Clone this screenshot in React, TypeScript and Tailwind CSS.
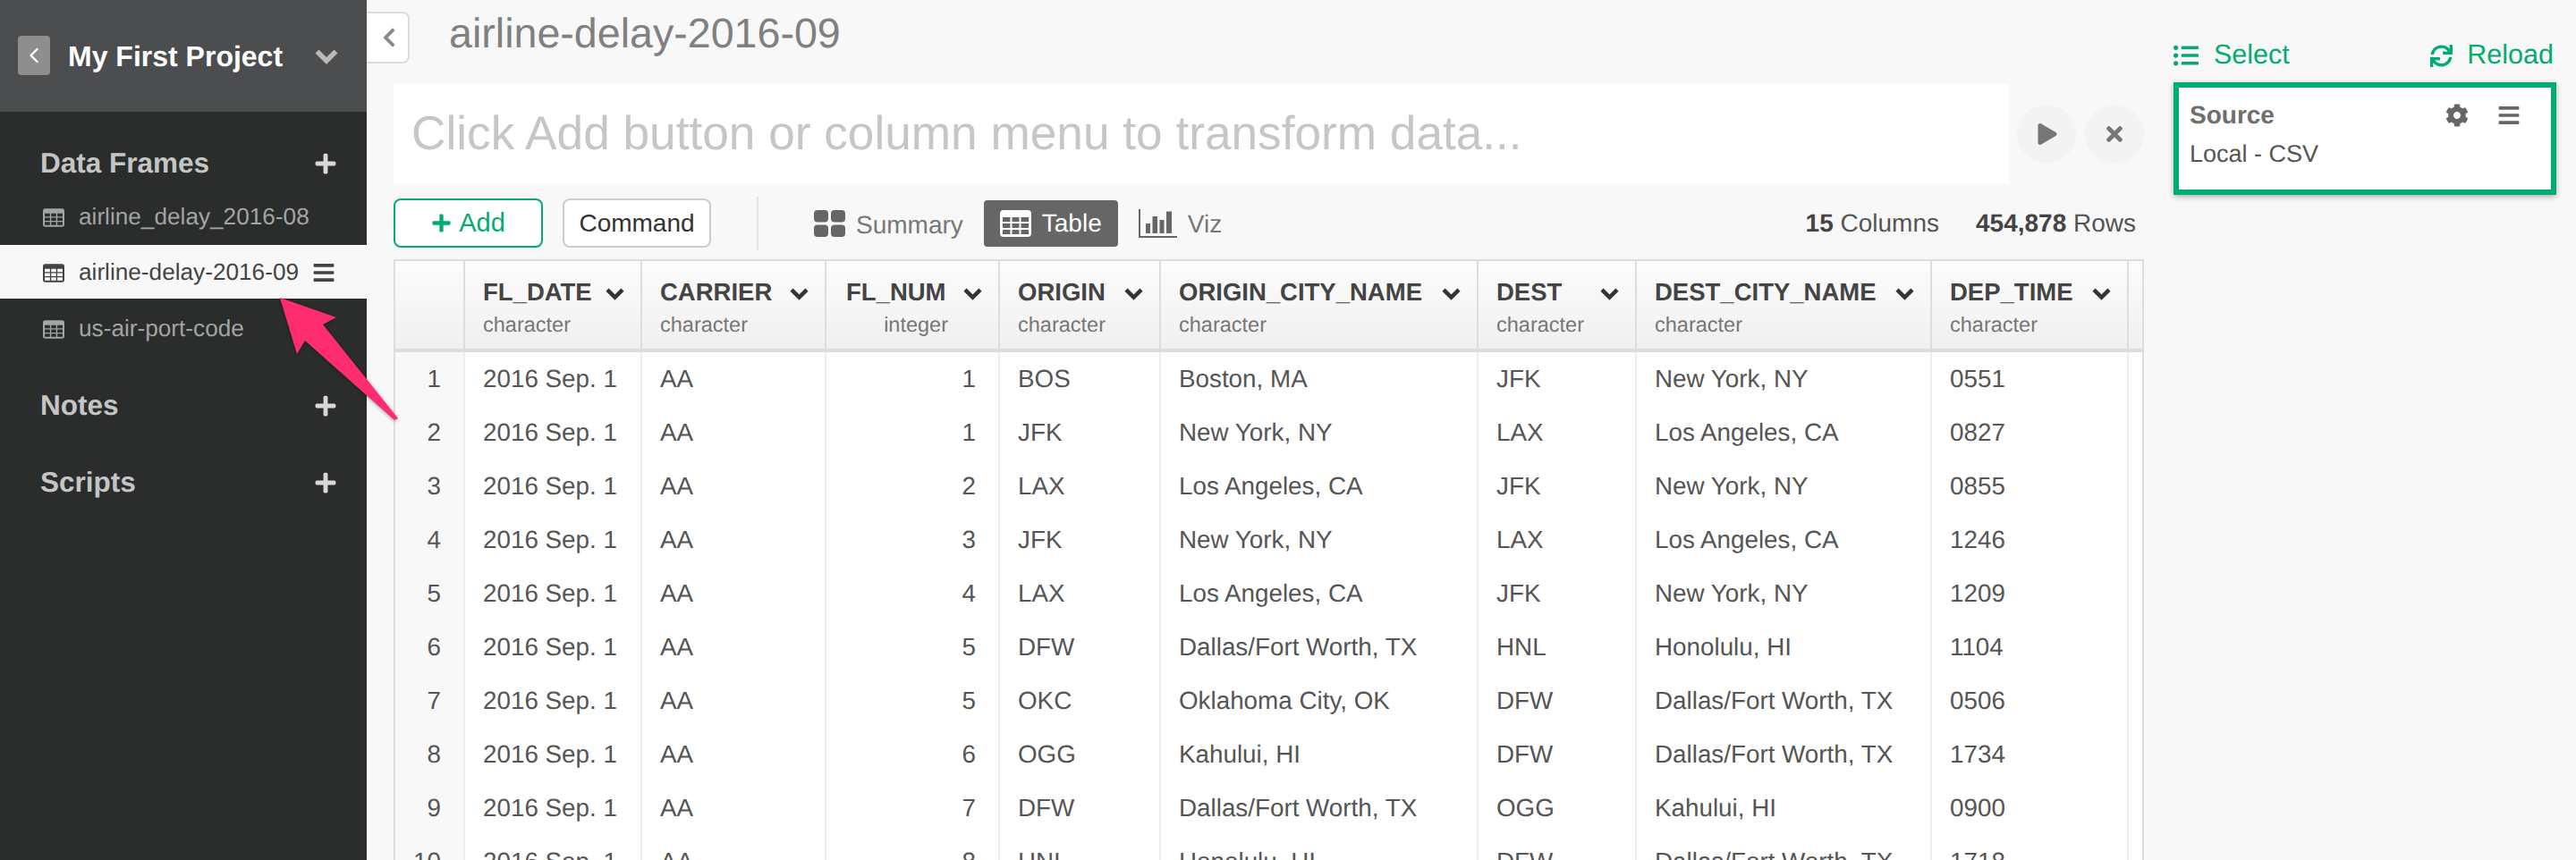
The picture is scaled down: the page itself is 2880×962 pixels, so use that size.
import { FaBars, FaChevronLeft, FaCog, FaListUl, FaPlay, FaPlus, FaSync, FaTimes } from 'react-icons/fa';
import { ChevronLeft } from 'lucide-react';

const gridCols = 'grid grid-cols-[78px_198px_206px_194px_180px_355px_177px_330px_220px_1fr]';

const columns = [
  { name: 'FL_DATE', type: 'character' },
  { name: 'CARRIER', type: 'character' },
  { name: 'FL_NUM', type: 'integer', right: true },
  { name: 'ORIGIN', type: 'character' },
  { name: 'ORIGIN_CITY_NAME', type: 'character' },
  { name: 'DEST', type: 'character' },
  { name: 'DEST_CITY_NAME', type: 'character' },
  { name: 'DEP_TIME', type: 'character' },
];

const rows = [
  ['1', 'BOS', 'Boston, MA', 'JFK', 'New York, NY', '0551'],
  ['1', 'JFK', 'New York, NY', 'LAX', 'Los Angeles, CA', '0827'],
  ['2', 'LAX', 'Los Angeles, CA', 'JFK', 'New York, NY', '0855'],
  ['3', 'JFK', 'New York, NY', 'LAX', 'Los Angeles, CA', '1246'],
  ['4', 'LAX', 'Los Angeles, CA', 'JFK', 'New York, NY', '1209'],
  ['5', 'DFW', 'Dallas/Fort Worth, TX', 'HNL', 'Honolulu, HI', '1104'],
  ['5', 'OKC', 'Oklahoma City, OK', 'DFW', 'Dallas/Fort Worth, TX', '0506'],
  ['6', 'OGG', 'Kahului, HI', 'DFW', 'Dallas/Fort Worth, TX', '1734'],
  ['7', 'DFW', 'Dallas/Fort Worth, TX', 'OGG', 'Kahului, HI', '0900'],
  ['8', 'HNL', 'Honolulu, HI', 'DFW', 'Dallas/Fort Worth, TX', '1718'],
];

function TableIcon({ className }: { className?: string }) {
  return (
    <svg viewBox="0 0 35 30" className={className} fill="currentColor">
      <path
        fillRule="evenodd"
        d="M4 0h27a4 4 0 0 1 4 4v22a4 4 0 0 1-4 4H4a4 4 0 0 1-4-4V4a4 4 0 0 1 4-4zM3 8v5h8.500V8zm10.500 0v5h8V8zm10 0v5H32V8zM3 15v5h8.500v-5zm10.500 0v5h8v-5zm10 0v5H32v-5zM3 22v5h8.500v-5zm10.500 0v5h8v-5zm10 0v5H32v-5z"
      />
    </svg>
  );
}

function SummaryIcon({ className }: { className?: string }) {
  return (
    <svg viewBox="0 0 35 30" className={className} fill="currentColor">
      <rect x="0" y="0" width="16" height="13.500" rx="4" />
      <rect x="19" y="0" width="16" height="13.500" rx="4" />
      <rect x="0" y="16.500" width="16" height="13.500" rx="4" />
      <rect x="19" y="16.500" width="16" height="13.500" rx="4" />
    </svg>
  );
}

function VizIcon({ className }: { className?: string }) {
  return (
    <svg viewBox="0 0 43 32" className={className} fill="currentColor">
      <path d="M0 0h2v30h41v2H0z" />
      <path d="M8 16h5v11H8zM15.500 8H21v19h-5.500zM23.500 12h5v15h-5zM31 2.500h6V27h-6z" />
    </svg>
  );
}

// same heavy "v" that the header and the column menus use
function Chevron({ className }: { className?: string }) {
  return (
    <svg viewBox="0 0 26 18" className={className} fill="none" stroke="currentColor" strokeWidth="5.500">
      <polyline points="2.500,3.500 13,14 23.500,3.500" />
    </svg>
  );
}

function SideHeading({ label, className }: { label: string; className?: string }) {
  return (
    <div className={`flex h-[50px] items-center justify-between pl-[45px] pr-[33px] ${className ?? ''}`}>
      <span className="text-[31.500px] font-bold text-[#c4c5c5]">{label}</span>
      <FaPlus className="h-[26px] w-[26px] text-[#d8d8d8]" />
    </div>
  );
}

export default function App() {
  return (
    <div className="relative flex h-[962px] w-[2880px] overflow-hidden bg-[#f8f8f8] font-['Liberation_Sans',Arial,sans-serif] [text-rendering:geometricPrecision]">
      <aside className="h-full w-[410px] shrink-0 bg-[#2b2d2d]">
        <div className="flex h-[125px] items-start bg-[#4c4d4f] pl-[20px] pr-[32px] pt-[40px]">
          <div className="flex h-[44px] w-[36px] items-center justify-center rounded-[4px] bg-[#8e8e8f]">
            <ChevronLeft className="h-[28px] w-[28px] text-white" strokeWidth={2} />
          </div>
          <span className="ml-[20px] text-[32px] font-bold leading-[46px] text-white">My First Project</span>
          <Chevron className="ml-auto mt-[14px] h-[18px] w-[26px] text-[#b9b9b9]" />
        </div>

        <SideHeading label="Data Frames" className="mt-[33px]" />
        <div className="mt-[4px] flex h-[62px] items-center pl-[48px] text-[#a3a4a4]">
          <TableIcon className="h-[21px] w-[24px]" />
          <span className="ml-[16px] text-[26.200px]">airline_delay_2016-08</span>
        </div>
        <div className="flex h-[60px] items-center bg-[#f8f8f8] pb-[0px] pl-[48px] pr-[36px] pt-[2px] text-[#444]">
          <TableIcon className="h-[21px] w-[24px]" />
          <span className="ml-[16px] text-[26.200px]">airline-delay-2016-09</span>
          <FaBars className="ml-auto h-[26px] w-[24px]" />
        </div>
        <div className="flex h-[66px] items-center pl-[48px] pt-[2px] text-[#a3a4a4]">
          <TableIcon className="h-[21px] w-[24px]" />
          <span className="ml-[16px] text-[26.200px]">us-air-port-code</span>
        </div>
        <SideHeading label="Notes" className="mt-[29px]" />
        <SideHeading label="Scripts" className="mt-[36px]" />
      </aside>

      <main className="h-full w-[1990px] shrink-0">
        <div className="flex h-[94px] items-start">
          <button className="mt-[13px] flex h-[58px] w-[48px] items-center justify-center rounded-r-[8px] border-2 border-l-0 border-[#ddd] bg-white pl-[3px] text-[#888]">
            <FaChevronLeft className="h-[24px] w-[24px]" />
          </button>
          <h1 className="ml-[44px] mt-[10px] text-[46.600px] leading-[54px] text-[#808080]">airline-delay-2016-09</h1>
        </div>

        <div className="ml-[30px] flex items-center">
          <div className="flex h-[112px] w-[1806px] items-center bg-white pl-[20px] text-[53.200px] text-[#c6c6c6]">
            Click Add button or column menu to transform data...
          </div>
          <div className="ml-[9px] flex h-[64px] w-[66px] items-center justify-center rounded-full bg-[#f3f3f3] text-[#777]">
            <FaPlay className="ml-[2px] h-[24px] w-[24px]" />
          </div>
          <div className="ml-[10px] flex h-[64px] w-[66px] items-center justify-center rounded-full bg-[#f3f3f3] text-[#777]">
            <FaTimes className="h-[26px] w-[22px]" />
          </div>
        </div>

        <div className="ml-[30px] mt-[16px] flex h-[55px] w-[1948px] items-center">
          <button className="flex h-[55px] w-[167px] items-center justify-center gap-[8px] rounded-[8px] border-2 border-[#02ac6e] bg-white text-[29px] text-[#02ac6e]">
            <FaPlus className="h-[23px] w-[23px]" />
            Add
          </button>
          <button className="ml-[22px] h-[55px] w-[166px] rounded-[8px] border-2 border-[#ccc] bg-white text-[28px] text-[#333]">Command</button>
          <div className="ml-[51px] h-[60px] w-[2px] bg-[#e4e4e4]" />
          <div className="ml-[62px] flex items-center text-[#777]">
            <SummaryIcon className="h-[30px] w-[35px] text-[#666]" />
            <span className="ml-[12px] mt-[4px] text-[28px]">Summary</span>
          </div>
          <div className="ml-[23px] flex h-[52px] w-[150px] items-center rounded-[4px] bg-[#666] pl-[18px] text-white">
            <TableIcon className="h-[30px] w-[35px]" />
            <span className="ml-[12px] text-[28px]">Table</span>
          </div>
          <div className="ml-[23px] flex items-center text-[#777]">
            <VizIcon className="h-[32px] w-[43px] text-[#666]" />
            <span className="ml-[12px] mt-[3px] text-[28px]">Viz</span>
          </div>
          <div className="ml-auto flex gap-[41px] text-[28px] text-[#555]">
            <span><b className="text-[#444]">15</b> Columns</span>
            <span><b className="text-[#444]">454,878</b> Rows</span>
          </div>
        </div>

        <div className="ml-[30px] mt-[13px] w-[1957px] border-x-2 border-t-2 border-[#ddd] text-[27.800px] text-[#555]">
          <div className={`${gridCols} h-[102px] border-b-4 border-[#ddd] bg-gradient-to-b from-[#fcfcfc] to-[#f0f0f0]`}>
            <div className="border-r-2 border-[#ddd]" />
            {columns.map((col) => (
              <div key={col.name} className={`border-r-2 border-[#ddd] pr-[18px] pt-[16px] ${col.right ? 'pl-[22px]' : 'pl-[20px]'}`}>
                <div className="flex h-[38px] items-center justify-between">
                  <span className="whitespace-nowrap text-[27.500px] font-bold text-[#444]">{col.name}</span>
                  <Chevron className="mt-[2px] h-[15px] w-[21px] text-[#333]" />
                </div>
                <div className={`text-[23.500px] leading-[34px] text-[#777] ${col.right ? 'pr-[38px] text-right' : ''}`}>{col.type}</div>
              </div>
            ))}
            <div />
          </div>
          {rows.map((row, i) => (
            <div key={i} className={`${gridCols} h-[60px] border-b-2 border-[#e2e2e2] leading-[60px]`}>
              <div className="border-r-2 border-[#eee] bg-[#f8f8f8] pr-[25px] text-right">{i + 1}</div>
              <div className="border-r-2 border-[#eee] bg-white pl-[20px]">2016 Sep. 1</div>
              <div className="border-r-2 border-[#eee] bg-white pl-[20px]">AA</div>
              <div className="border-r-2 border-[#eee] bg-white pr-[25px] text-right">{row[0]}</div>
              <div className="border-r-2 border-[#eee] bg-white pl-[20px]">{row[1]}</div>
              <div className="border-r-2 border-[#eee] bg-white pl-[20px]">{row[2]}</div>
              <div className="border-r-2 border-[#eee] bg-white pl-[20px]">{row[3]}</div>
              <div className="border-r-2 border-[#eee] bg-white pl-[20px]">{row[4]}</div>
              <div className="border-r-2 border-[#eee] bg-white pl-[20px]">{row[5]}</div>
              <div className="bg-white" />
            </div>
          ))}
        </div>
      </main>

      <section className="ml-[30px] w-[428px] shrink-0">
        <div className="flex h-[92px] items-center justify-between pr-[3px] pt-[32px] text-[30.500px] text-[#02ac6e]">
          <span className="flex items-center gap-[17px]"><FaListUl className="h-[28px] w-[28px]" />Select</span>
          <span className="flex items-center gap-[16px]"><FaSync className="h-[25px] w-[25px]" />Reload</span>
        </div>
        <div className="h-[126px] border-[6px] border-[#02ac6e] bg-white pl-[12px] pr-[34px] pt-[9px] shadow-[0_2px_6px_rgba(0,0,0,0.3)]">
          <div className="flex h-[44px] items-center">
            <span className="text-[28px] font-bold text-[#6e6e6e]">Source</span>
            <FaCog className="ml-auto h-[26px] w-[26px] text-[#666]" />
            <FaBars className="ml-[32px] h-[26px] w-[26px] text-[#666]" />
          </div>
          <div className="mt-[1px] text-[27px] leading-[40px] text-[#555]">Local - CSV</div>
        </div>
      </section>

      {/* annotation arrow drawn over the sidebar */}
      <svg className="pointer-events-none absolute left-[300px] top-[320px] h-[160px] w-[160px] drop-shadow-[0_1px_2px_rgba(0,0,0,0.35)]" viewBox="300 320 160 160">
        <polygon points="313,333 376,355 361,363 445,468 441,470 341,381 332,396" fill="#ff2d6f" />
      </svg>
    </div>
  );
}
